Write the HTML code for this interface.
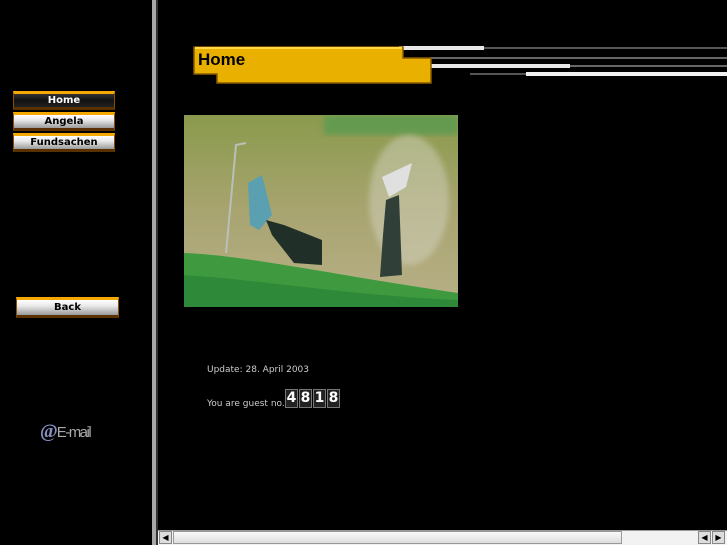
<!DOCTYPE html>
<html><head><style>
body{margin:0;width:727px;height:545px;background:#000;position:relative;overflow:hidden;font-family:"Liberation Sans",sans-serif}
.a{position:absolute}
.btn{position:absolute;left:13px;width:102px;height:19px;box-sizing:border-box;border-top:3px solid #f5a800;border-bottom:3px solid #5a3000;border-left:1px solid #8a5000;border-right:1px solid #8a5000;background:linear-gradient(#fff,#e8e8e8 40%,#9a9a9a);font:bold 10px "DejaVu Sans",sans-serif;text-align:center;line-height:14px;color:#000}
.d{width:11px;height:17px;background:#222;border:1px solid #777;color:#fff;font:bold 14px 'DejaVu Sans',sans-serif;text-align:center;line-height:17px}
</style></head><body>
<div class="btn" style="top:91px;background:linear-gradient(#333,#111 50%,#222);color:#fff">Home</div>
<div class="btn" style="top:112px">Angela</div>
<div class="btn" style="top:133px">Fundsachen</div>
<div class="btn" style="top:297px;left:16px;width:103px;height:21px;line-height:16px">Back</div>
<div class="a" style="left:40px;top:421px;color:#8890c0;font:bold 19px 'Liberation Serif',serif;letter-spacing:-1px">@<span style="color:#aaa;font:15px 'Liberation Sans Narrow','Liberation Sans',sans-serif;letter-spacing:-1.5px">E-mail</span></div>
<div class="a" style="left:152px;top:0;width:4px;height:545px;background:#a8a8a8"></div>
<div class="a" style="left:156px;top:0;width:2px;height:545px;background:#333"></div>
<svg class="a" style="left:190px;top:40px" width="537" height="50">
<rect x="210" y="7" width="327" height="2" fill="#555"/>
<rect x="209" y="6" width="85" height="4" fill="#e8e8e8"/>
<rect x="240" y="17" width="297" height="2" fill="#666"/>
<rect x="235" y="25" width="302" height="2" fill="#666"/>
<rect x="234" y="24" width="146" height="4" fill="#e8e8e8"/>
<rect x="280" y="33" width="60" height="2" fill="#555"/>
<rect x="336" y="32" width="201" height="4" fill="#f0f0f0"/>
<path d="M4 7H213V18H241V43H27V34H4Z" fill="#eab000" stroke="#8a5a00" stroke-width="1.5"/>
<path d="M5 8H212" stroke="#ffd84a" stroke-width="2"/>
<text x="8" y="25" font-family="Liberation Sans" font-weight="bold" font-size="17" fill="#000">Home</text>
</svg>
<svg class="a" style="left:184px;top:115px" width="274" height="192" viewBox="0 0 274 192">
<defs><linearGradient id="s" x1="0" y1="0" x2="0" y2="1"><stop offset="0" stop-color="#8a9a4c"/><stop offset=".5" stop-color="#a8a470"/><stop offset="1" stop-color="#b8b088"/></linearGradient>
<filter id="b"><feGaussianBlur stdDeviation="3"/></filter></defs>
<rect width="274" height="192" fill="url(#s)"/>
<rect x="140" y="0" width="134" height="20" fill="#4a9a50" opacity=".6" filter="url(#b)"/>
<ellipse cx="225" cy="85" rx="40" ry="65" fill="#d8d8c8" opacity=".45" filter="url(#b)"/>
<path d="M0 138C60 140 150 160 274 178V192H0Z" fill="#3f9a3f"/>
<path d="M0 160C80 165 160 180 274 185V192H0Z" fill="#2e8a38"/>
<path d="M42 138L52 30L62 28" stroke="#b8c0b8" stroke-width="2" fill="none"/>
<path d="M64 68L78 60L88 100L75 115L66 110Z" fill="#5aa0b0"/>
<path d="M82 105L100 110L138 125L138 150L110 148L88 120Z" fill="#203028"/>
<path d="M198 62L228 48L222 72L205 82Z" fill="#e0e0e0"/>
<path d="M202 85L215 80L218 160L196 162L199 120Z" fill="#304038"/>
</svg>
<div class="a" style="left:207px;top:365px;color:#ccc;font:9px 'DejaVu Sans',sans-serif">Update: 28. April 2003</div>
<div class="a" style="left:207px;top:399px;color:#ccc;font:9px 'DejaVu Sans',sans-serif">You are guest no.</div>
<div class="a" style="left:285px;top:389px;display:flex;gap:1px">
<span class="d">4</span><span class="d">8</span><span class="d">1</span><span class="d">8</span>
</div>
<div class="a" style="left:158px;top:530px;width:569px;height:15px;background:#f2f2f2;border-top:1px solid #999;box-sizing:border-box"></div>
<div class="a" style="left:159px;top:531px;width:13px;height:13px;background:#ddd;border:1px solid #888;box-sizing:border-box;font-size:8px;line-height:11px;text-align:center">◀</div>
<div class="a" style="left:173px;top:531px;width:449px;height:13px;background:linear-gradient(#fafafa,#ddd);border:1px solid #999;box-sizing:border-box"></div>
<div class="a" style="left:698px;top:531px;width:13px;height:13px;background:#ddd;border:1px solid #888;box-sizing:border-box;font-size:8px;line-height:11px;text-align:center">◀</div>
<div class="a" style="left:712px;top:531px;width:13px;height:13px;background:#ddd;border:1px solid #888;box-sizing:border-box;font-size:8px;line-height:11px;text-align:center">▶</div>
</body></html>
